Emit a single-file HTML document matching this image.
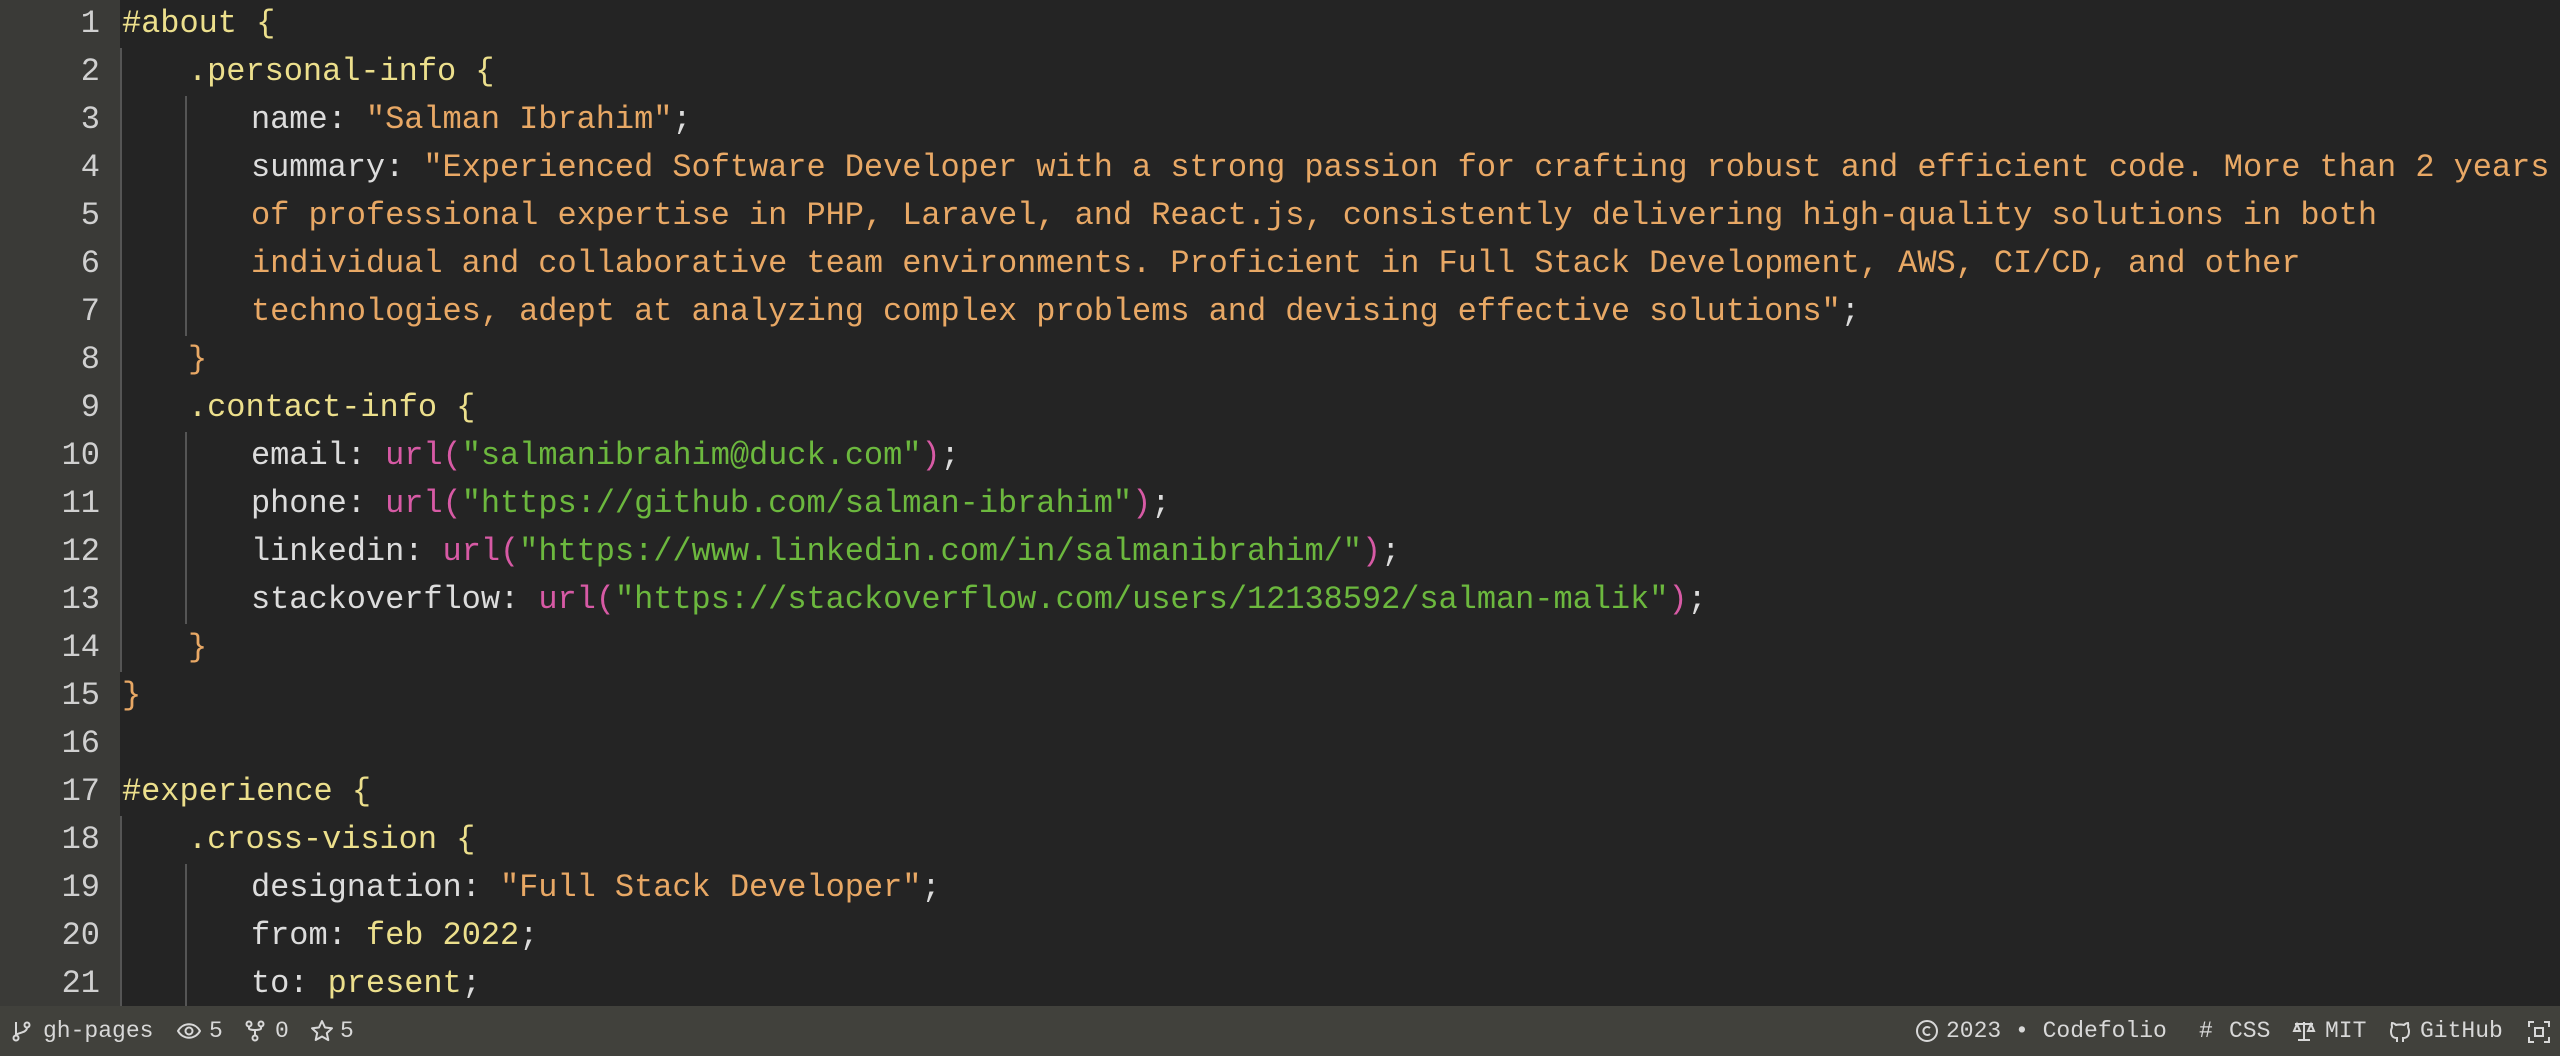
<!DOCTYPE html>
<html><head><meta charset="utf-8"><style>
html,body{margin:0;padding:0;width:2560px;height:1056px;overflow:hidden;background:#242424;}
#gut{position:absolute;left:0;top:0;width:120px;height:1006px;background:#3a3a37;}
#ed{position:absolute;left:0;top:0;width:2560px;height:1006px;font-family:"Liberation Mono",monospace;font-size:32px;}
.l{position:absolute;left:0;height:48px;line-height:48px;white-space:pre;color:#dcdcdc;width:2560px}
.n{position:absolute;left:0;width:100px;text-align:right;color:#d0d0d0}
.c{position:absolute;left:122px;letter-spacing:-0.05px}
.c.i1{left:188px}.c.i2{left:251px}
.g{position:absolute;top:0;bottom:0;width:2px;background:#555}
.s{color:#ecdf8c}.o{color:#e8a865}.p{color:#d75aa5}.u{color:#6cb83e}.v{color:#ecdf8c}
#sb{position:absolute;left:0;top:1006px;width:2560px;height:50px;background:#41413c;color:#d8d8d8;font-family:"Liberation Mono",monospace;font-size:23px;line-height:50px;}
#sb span,#sb svg{position:absolute}
#sb svg{top:14px}
</style></head><body>
<div id="gut"></div>
<div id="ed">
<div class="l" style="top:0"><span class="n">1</span><span class="c"><span class="s">#about {</span></span></div>
<div class="l" style="top:48px"><span class="n">2</span><span class="c i1"><span class="s">.personal-info {</span></span></div>
<div class="l" style="top:96px"><span class="n">3</span><span class="c i2">name: <span class="o">"Salman Ibrahim"</span>;</span></div>
<div class="l" style="top:144px"><span class="n">4</span><span class="c i2">summary: <span class="o">"Experienced Software Developer with a strong passion for crafting robust and efficient code. More than 2 years</span></span></div>
<div class="l" style="top:192px"><span class="n">5</span><span class="c i2"><span class="o">of professional expertise in PHP, Laravel, and React.js, consistently delivering high-quality solutions in both</span></span></div>
<div class="l" style="top:240px"><span class="n">6</span><span class="c i2"><span class="o">individual and collaborative team environments. Proficient in Full Stack Development, AWS, CI/CD, and other</span></span></div>
<div class="l" style="top:288px"><span class="n">7</span><span class="c i2"><span class="o">technologies, adept at analyzing complex problems and devising effective solutions"</span>;</span></div>
<div class="l" style="top:336px"><span class="n">8</span><span class="c i1"><span class="o">}</span></span></div>
<div class="l" style="top:384px"><span class="n">9</span><span class="c i1"><span class="s">.contact-info {</span></span></div>
<div class="l" style="top:432px"><span class="n">10</span><span class="c i2">email: <span class="p">url(</span><span class="u">"salmanibrahim@duck.com"</span><span class="p">)</span>;</span></div>
<div class="l" style="top:480px"><span class="n">11</span><span class="c i2">phone: <span class="p">url(</span><span class="u">"https://github.com/salman-ibrahim"</span><span class="p">)</span>;</span></div>
<div class="l" style="top:528px"><span class="n">12</span><span class="c i2">linkedin: <span class="p">url(</span><span class="u">"https://www.linkedin.com/in/salmanibrahim/"</span><span class="p">)</span>;</span></div>
<div class="l" style="top:576px"><span class="n">13</span><span class="c i2">stackoverflow: <span class="p">url(</span><span class="u">"https://stackoverflow.com/users/12138592/salman-malik"</span><span class="p">)</span>;</span></div>
<div class="l" style="top:624px"><span class="n">14</span><span class="c i1"><span class="o">}</span></span></div>
<div class="l" style="top:672px"><span class="n">15</span><span class="c"><span class="o">}</span></span></div>
<div class="l" style="top:720px"><span class="n">16</span></div>
<div class="l" style="top:768px"><span class="n">17</span><span class="c"><span class="s">#experience {</span></span></div>
<div class="l" style="top:816px"><span class="n">18</span><span class="c i1"><span class="s">.cross-vision {</span></span></div>
<div class="l" style="top:864px"><span class="n">19</span><span class="c i2">designation: <span class="o">"Full Stack Developer"</span>;</span></div>
<div class="l" style="top:912px"><span class="n">20</span><span class="c i2">from: <span class="v">feb 2022</span>;</span></div>
<div class="l" style="top:960px"><span class="n">21</span><span class="c i2">to: <span class="v">present</span>;</span></div>
<div class="g" style="left:120px;top:48px;height:624px;bottom:auto"></div>
<div class="g" style="left:185px;top:96px;height:240px;bottom:auto"></div>
<div class="g" style="left:185px;top:432px;height:192px;bottom:auto"></div>
<div class="g" style="left:120px;top:816px;height:190px;bottom:auto"></div>
<div class="g" style="left:185px;top:864px;height:142px;bottom:auto"></div>
</div>
<div id="sb">
<svg style="left:12px" width="20" height="22" viewBox="0 0 20 22" fill="none" stroke="#d8d8d8" stroke-width="2"><circle cx="4" cy="18" r="2.5"/><circle cx="15" cy="5" r="2.5"/><path d="M4 2v13.5M15 7.5c0 6-11 5-11 8"/></svg>
<span style="left:43px">gh-pages</span>
<svg style="left:177px;top:15px" width="24" height="20" viewBox="0 0 24 20" fill="none" stroke="#d8d8d8" stroke-width="2"><path d="M1 10c5-9 17-9 22 0c-5 9-17 9-22 0z"/><circle cx="12" cy="10" r="3.5"/></svg>
<span style="left:209px">5</span>
<svg style="left:244px" width="22" height="22" viewBox="0 0 22 22" fill="none" stroke="#d8d8d8" stroke-width="2"><circle cx="5" cy="4" r="2.5"/><circle cx="17" cy="4" r="2.5"/><circle cx="11" cy="18" r="2.5"/><path d="M5 6.5v2c0 2 12 2 12 0v-2M11 10v5.5"/></svg>
<span style="left:275px">0</span>
<svg style="left:310px;top:13px" width="24" height="24" viewBox="0 0 24 24" fill="none" stroke="#d8d8d8" stroke-width="2" stroke-linejoin="round"><path d="M12 2l3 6.5 7 .8-5.2 4.8 1.5 7L12 17.5 5.7 21l1.5-7L2 9.3l7-.8z"/></svg>
<span style="left:340px">5</span>
<svg style="left:1915px;top:13px" width="24" height="24" viewBox="0 0 24 24" fill="none" stroke="#d8d8d8" stroke-width="2"><circle cx="12" cy="12" r="10"/><path d="M15 9a4 4 0 1 0 0 6"/></svg>
<span style="left:1946px">2023 • Codefolio</span>
<span style="left:2199px">#</span><span style="left:2229px">CSS</span>
<svg style="left:2292px" width="24" height="22" viewBox="0 0 24 22" fill="none" stroke="#d8d8d8" stroke-width="2"><path d="M12 2v18M6 20h12M3 4h18M5 4l-3 7h6zM19 4l-3 7h6z"/></svg>
<span style="left:2325px">MIT</span>
<svg style="left:2389px" width="22" height="24" viewBox="0 0 22 24" fill="none" stroke="#d8d8d8" stroke-width="2"><path d="M8 22v-4c-4 0-6-2-6-7 0-2 1-3 1-4-.5-2 0-4 0-4s2 0 4 2c2-.6 6-.6 8 0 2-2 4-2 4-2s.5 2 0 4c0 1 1 2 1 4 0 5-2 7-6 7v4"/></svg>
<span style="left:2420px">GitHub</span>
<svg style="left:2527px" width="24" height="24" viewBox="0 0 24 24" fill="none" stroke="#d8d8d8" stroke-width="2"><path d="M2 7V2h5M17 2h5v5M22 17v5h-5M7 22H2v-5"/><rect x="8" y="8" width="8" height="8"/></svg>
</div>
</body></html>
